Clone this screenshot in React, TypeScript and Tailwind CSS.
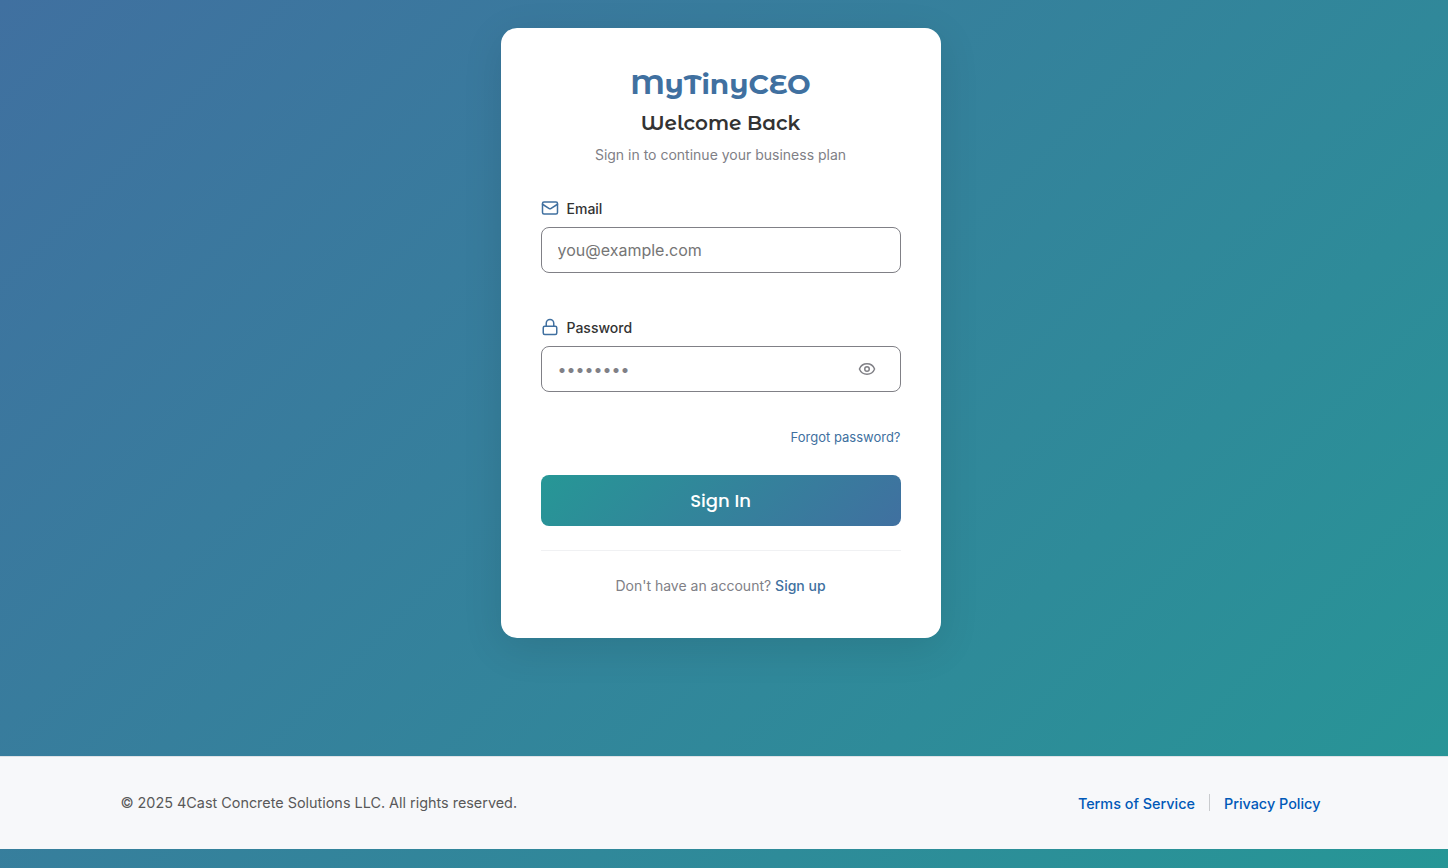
import { Eye, Lock, Mail } from "lucide-react";

export default function App() {
  return (
    <div className="flex h-[868px] flex-col overflow-hidden bg-[linear-gradient(135deg,#4070a0_0%,#269796_102%)] font-['Inter',sans-serif]">
      <main className="flex h-[756px] shrink-0 justify-center pt-7 pr-[7px]">
        <section className="flex h-[610px] w-[440px] flex-col rounded-2xl bg-white px-10 pt-10 shadow-[0_10px_40px_rgba(0,0,0,0.1)]">
          <header className="flex flex-col items-center">
            <h1 className="h-8 whitespace-nowrap font-['Montserrat_Alternates','Lato',sans-serif] text-[28px] leading-8 font-bold text-[#4070a0]">
              MyTinyCEO
            </h1>
            <h2 className="mt-2 h-[30px] whitespace-nowrap font-['Montserrat_Alternates','Lato',sans-serif] text-xl leading-[30px] font-semibold text-[#333333]">
              Welcome Back
            </h2>
            <p className="mt-[6px] text-sm leading-[22px] text-[#808086]">
              Sign in to continue your business plan
            </p>
          </header>

          <form className="mt-8 flex flex-col" onSubmit={(e) => e.preventDefault()}>
            <label htmlFor="email" className="flex h-[21px] items-center gap-2 text-sm font-medium text-[#333333]">
              <Mail className="mb-[2px] size-[18px] text-[#4070a0]" />
              Email
            </label>
            <input
              id="email"
              type="email"
              placeholder="you@example.com"
              className="mt-2 h-[46px] w-full rounded-lg border border-[#808086] px-4 text-base text-[#333333] placeholder:text-[#757575]"
            />

            <label htmlFor="password" className="mt-11 flex h-[21px] items-center gap-2 text-sm font-medium text-[#333333]">
              <Lock className="mb-[2px] size-[18px] text-[#4070a0]" />
              Password
            </label>
            <div className="mt-2 flex h-[46px] items-center rounded-lg border border-[#808086] pr-6 pl-4">
              <input
                id="password"
                type="password"
                placeholder="••••••••"
                className="min-w-0 flex-1 text-base text-[#333333] placeholder:text-[#808086]"
              />
              <button type="button" aria-label="Show password" className="text-[#808086]">
                <Eye className="size-[18px]" />
              </button>
            </div>

            <a href="#" className="mt-[35px] self-end text-[13px] leading-5 text-[#4070a0]">
              Forgot password?
            </a>
            <button
              type="submit"
              className="mt-7 h-[51px] rounded-lg bg-[linear-gradient(135deg,#269796_0%,#4070a0_100%)] font-['Poppins','Inter',sans-serif] text-lg font-medium text-white"
            >
              Sign In
            </button>
          </form>

          <div className="mt-6 border-t border-[#f0f1f3] pt-6 text-center text-sm leading-[22px] text-[#808086]">
            Don't have an account?{" "}
            <a href="#" className="font-medium text-[#4070a0]">Sign up</a>
          </div>
        </section>
      </main>

      <footer className="flex h-[93px] shrink-0 items-center justify-between border-t border-[#dee2e6] bg-[#f7f8fa] pr-[127.6px] pl-[120.4px] text-[14.4px] text-[#595959]">
        <p>© 2025 4Cast Concrete Solutions LLC. All rights reserved.</p>
        <nav className="flex items-center font-medium text-[#0059b8]">
          <a href="#" className="pt-[2px]">Terms of Service</a>
          <span className="mr-[14px] ml-[14px] h-[17px] w-px bg-[#c9cbce]" />
          <a href="#" className="pt-[2px]">Privacy Policy</a>
        </nav>
      </footer>
    </div>
  );
}
